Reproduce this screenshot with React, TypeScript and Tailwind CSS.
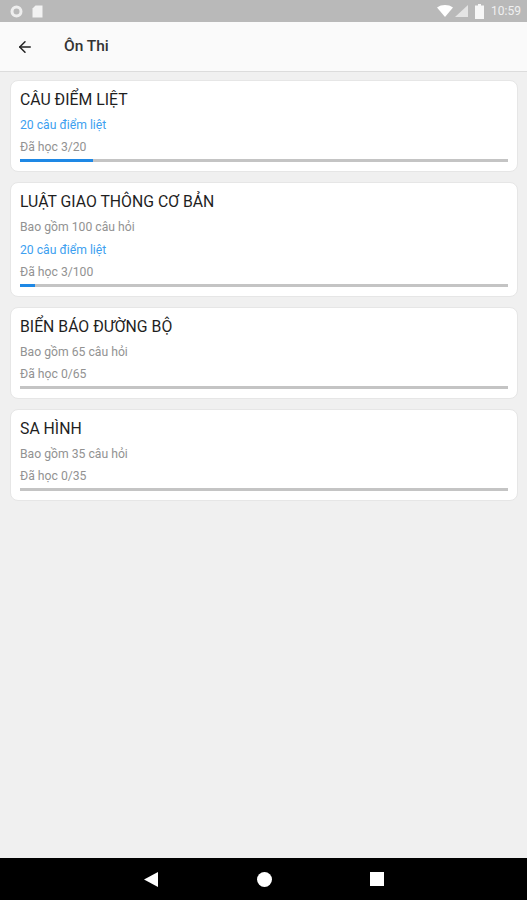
import { ArrowLeft } from 'lucide-react';

type Topic = {
  title: string;
  total?: string;
  critical?: string;
  learned: string;
  percent: number;
};

const topics: Topic[] = [
  { title: 'CÂU ĐIỂM LIỆT', critical: '20 câu điểm liệt', learned: 'Đã học 3/20', percent: 15 },
  { title: 'LUẬT GIAO THÔNG CƠ BẢN', total: 'Bao gồm 100 câu hỏi', critical: '20 câu điểm liệt', learned: 'Đã học 3/100', percent: 3 },
  { title: 'BIỂN BÁO ĐƯỜNG BỘ', total: 'Bao gồm 65 câu hỏi', learned: 'Đã học 0/65', percent: 0 },
  { title: 'SA HÌNH', total: 'Bao gồm 35 câu hỏi', learned: 'Đã học 0/35', percent: 0 },
];

function StatusBar() {
  return (
    <div className="h-[22px] bg-[#b9b9b9] flex items-center justify-between pl-[10px] pr-[6px] shrink-0">
      <div className="flex items-center gap-[9px]">
        <svg width="13" height="13" viewBox="0 0 13 13">
          <circle cx="6.5" cy="6.5" r="4.5" fill="none" stroke="#eeeeee" strokeWidth="3" />
        </svg>
        <svg width="11" height="13" viewBox="0 0 11 13">
          <path d="M3.5 0.5H10.5V12.5H0.5V3.5Z" fill="#f2f2f2" />
        </svg>
      </div>
      <div className="flex items-center">
        <svg width="16" height="12" viewBox="0 0 16 12">
          <path d="M0 2.5C4.5 -0.8 11.5 -0.8 16 2.5L8 12Z" fill="#ffffff" />
        </svg>
        <svg width="13" height="12" viewBox="0 0 13 12" className="ml-[2px]">
          <path d="M13 0V12H0Z" fill="#e4e4e4" />
        </svg>
        <svg width="9" height="15" viewBox="0 0 9 15" className="ml-[7px]">
          <path d="M3 0H6V1.5H9V15H0V1.5H3Z" fill="#f7f7f7" />
        </svg>
        <span className="ml-[7px] text-[12px] text-[#f0f0f0] font-['Roboto',sans-serif]">10:59</span>
      </div>
    </div>
  );
}

function TopicCard({ topic }: { topic: Topic }) {
  return (
    <div className="bg-white rounded-[8px] border border-[#e6e6e6] px-[9px] pt-[9px] pb-[9px]">
      <h2 className="text-[15.8px] leading-[20px] text-[#1f1f1f] font-normal">{topic.title}</h2>
      {topic.total && <p className="mt-[5px] text-[12.2px] leading-[20px] text-[#929292]">{topic.total}</p>}
      {topic.critical && (
        <p className={`${topic.total ? 'mt-[3px]' : 'mt-[5px]'} text-[12.2px] leading-[20px] text-[#3d9ff0]`}>{topic.critical}</p>
      )}
      <p className="mt-[2px] text-[12.2px] leading-[20px] text-[#929292]">{topic.learned}</p>
      <div className="mt-[2px] h-[3px] bg-[#c4c4c4]">
        <div className="h-full bg-[#1e88e5]" style={{ width: `${topic.percent}%` }} />
      </div>
    </div>
  );
}

export default function App() {
  return (
    <div className="w-[527px] h-[900px] flex flex-col bg-[#f0f0f0] overflow-hidden font-['Roboto',sans-serif]">
      <StatusBar />

      {/* Toolbar */}
      <div className="h-[50px] bg-[#fafafa] border-b border-[#dcdcdc] flex items-center pl-[16px] shrink-0">
        <ArrowLeft size={18} strokeWidth={2} className="text-[#222222]" />
        <span className="ml-[30px] text-[15.5px] font-medium text-[#333333]">Ôn Thi</span>
      </div>

      {/* Topics */}
      <div className="flex-1 flex flex-col gap-[10px] pl-[10px] pt-[8px] pr-[9px]">
        {topics.map((topic) => (
          <TopicCard key={topic.title} topic={topic} />
        ))}
      </div>

      {/* Android nav */}
      <div className="h-[42px] bg-black flex items-center justify-center shrink-0">
        <svg width="14" height="15" viewBox="0 0 14 15">
          <path d="M14 0V15L0 7.5Z" fill="#ffffff" />
        </svg>
        <div className="ml-[99px] w-[15px] h-[15px] rounded-full bg-white" />
        <div className="ml-[98px] w-[14px] h-[14px] bg-white" />
      </div>
    </div>
  );
}
